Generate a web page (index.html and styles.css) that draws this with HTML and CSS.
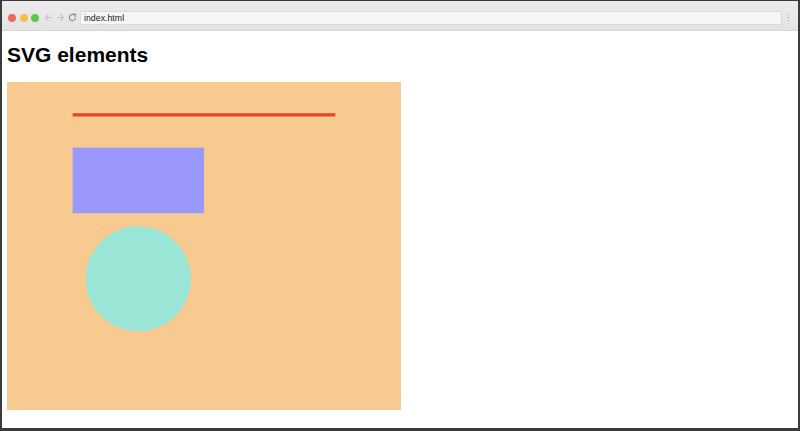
FILE: index.html
```html
<!DOCTYPE html>
<html>
<head>
<meta charset="utf-8">
<title>index.html</title>
<link rel="stylesheet" href="styles.css">
</head>
<body>
<div class="window">
  <div class="toolbar">
    <div class="lights">
      <span class="light red"></span>
      <span class="light yellow"></span>
      <span class="light green"></span>
    </div>
    <div class="nav">
      <svg class="nav-icon" width="9" height="9" viewBox="0 0 9 9"><path d="M8 4.5H1.5M4.5 1.5L1.5 4.5L4.5 7.5" fill="none" stroke="#c4c4c4" stroke-width="1.1"/></svg>
      <svg class="nav-icon" width="9" height="9" viewBox="0 0 9 9"><path d="M1 4.5H7.5M4.5 1.5L7.5 4.5L4.5 7.5" fill="none" stroke="#c4c4c4" stroke-width="1.1"/></svg>
      <svg class="nav-icon" width="9" height="9" viewBox="0 0 9 9"><path d="M7.6 4.5A3.1 3.1 0 1 1 6.6 2.2" fill="none" stroke="#8a8a8a" stroke-width="1.1"/><path d="M5.2 0.8L7.6 1.4L7 3.8" fill="none" stroke="#8a8a8a" stroke-width="1.1"/></svg>
    </div>
    <div class="url">index.html</div>
    <div class="menu"><span></span><span></span><span></span></div>
  </div>
  <div class="content">
    <h1 class="title">SVG elements</h1>
    <svg class="canvas" width="394" height="328" viewBox="0 0 600 500" preserveAspectRatio="none">
      <rect x="0" y="0" width="600" height="500" fill="#f7cb8f"/>
      <line x1="100" y1="50" x2="500" y2="50" stroke="#e4452b" stroke-width="5"/>
      <rect x="100" y="100" width="200" height="100" fill="#9a99fb"/>
      <circle cx="200" cy="300" r="80" fill="#99e5d6"/>
    </svg>
  </div>
</div>
</body>
</html>
```

FILE: styles.css
```css
html, body {
  margin: 0;
  padding: 0;
  background: #3b3b3b;
}

body {
  width: 800px;
  height: 431px;
  overflow: hidden;
  font-family: "Liberation Sans", Arial, sans-serif;
}

.window {
  box-sizing: border-box;
  width: 800px;
  height: 431px;
  border: 2px solid #3b3b3b;
  border-top-width: 1px;
  border-bottom-width: 3px;
  background: #ffffff;
  display: flex;
  flex-direction: column;
}

.toolbar {
  height: 30px;
  flex: none;
  box-sizing: border-box;
  border-bottom: 1px solid #d6d6d6;
  background: linear-gradient(#ececec, #e3e3e3);
  display: flex;
  align-items: center;
  padding-left: 6px;
  padding-right: 5px;
  padding-top: 4px;
}

.lights {
  display: flex;
  gap: 3.5px;
}

.light {
  width: 8px;
  height: 8px;
  border-radius: 50%;
  display: block;
}

.red { background: #ec6a5e; }
.yellow { background: #f4bf4f; }
.green { background: #61c554; }

.nav {
  display: flex;
  gap: 3px;
  margin-left: 5px;
}

.nav-icon {
  display: block;
}

.url {
  margin-left: 3px;
  flex: 1;
  height: 14px;
  box-sizing: border-box;
  background: #f6f6f6;
  border: 1px solid #dadada;
  border-radius: 2px;
  font-size: 8.8px;
  line-height: 12px;
  color: #222222;
  padding-left: 3px;
  font-weight: normal;
}

.menu {
  width: 9px;
  display: flex;
  flex-direction: column;
  align-items: center;
  gap: 1.5px;
  margin-left: 2px;
}

.menu span {
  width: 1.6px;
  height: 1.6px;
  background: #777777;
  border-radius: 50%;
  display: block;
}

.content {
  flex: 1;
  padding-left: 5px;
  padding-top: 12px;
}

.title {
  margin: 0 0 15px 0;
  font-size: 21px;
  line-height: 24px;
  font-weight: bold;
  color: #000000;
}

.canvas {
  display: block;
}
```
